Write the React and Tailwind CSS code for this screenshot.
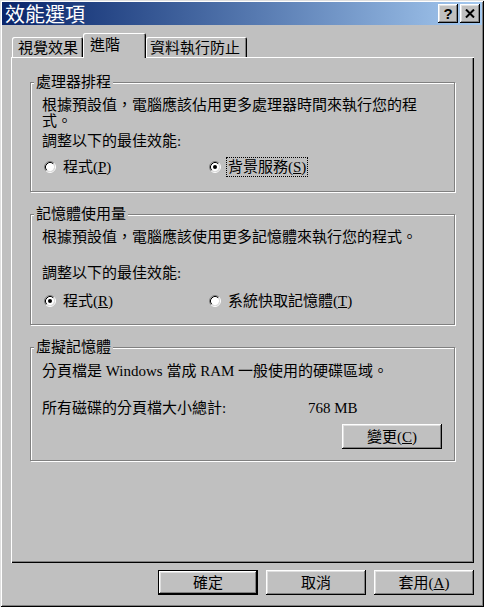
import React from 'react';

const raised = 'shadow-[inset_-1px_-1px_0_#000,inset_1px_1px_0_#fff,inset_-2px_-2px_0_#808080,inset_2px_2px_0_#dfdfdf]';

function Radio({ checked }) {
    return (
        <svg width="12" height="12" viewBox="0 0 12 12" className="shrink-0">
            <circle cx="6" cy="6" r="4.2" fill="#fff" />
            <path d="M2.11 9.89 A5.5 5.5 0 0 1 9.89 2.11" fill="none" stroke="#808080" />
            <path d="M9.89 2.11 A5.5 5.5 0 0 1 2.11 9.89" fill="none" stroke="#fff" />
            <path d="M2.82 9.18 A4.5 4.5 0 0 1 9.18 2.82" fill="none" stroke="#000" />
            <path d="M9.18 2.82 A4.5 4.5 0 0 1 2.82 9.18" fill="none" stroke="#dfdfdf" />
            {checked && <circle cx="6" cy="6" r="2" fill="#000" />}
        </svg>
    );
}

function Group({ label, className, children }) {
    return (
        <div className={`relative w-[425px] border border-[#808080] shadow-[inset_1px_1px_0_#fff,1px_1px_0_#fff] pl-[11px] ${className}`}>
            <span className="absolute -top-[9px] left-[3px] px-[2px] bg-[#c0c0c0]">{label}</span>
            {children}
        </div>
    );
}

function Button({ className = '', children }) {
    return (
        <button className={`h-[25px] w-[100px] flex items-center justify-center bg-[#c0c0c0] ${raised} ${className}`}>
            {children}
        </button>
    );
}

function Option({ checked, focused, children }) {
    return (
        <label className="w-[165px] flex items-center gap-[7px] pl-[2px]">
            <Radio checked={checked} />
            <span className={focused ? 'outline outline-1 outline-dotted outline-black outline-offset-[1px]' : ''}>
                {children}
            </span>
        </label>
    );
}

export default function App() {
    return (
        <div className="w-[484px] h-[607px] bg-[#c0c0c0] p-[2px] flex flex-col font-['Liberation_Serif','Noto_Sans_CJK_TC',serif] text-[15px] leading-[16px] text-black shadow-[inset_1px_1px_0_#dfdfdf,inset_-1px_-1px_0_#000,inset_2px_2px_0_#fff,inset_-2px_-2px_0_#808080]">
            {/* title bar */}
            <div className="h-[23px] flex items-center justify-between bg-linear-to-r from-[#0a246a] to-[#a6caf0] pl-[3px] pr-[2px]">
                <span className="text-white text-[20px] leading-[22px] font-['Noto_Sans_CJK_TC',sans-serif]">效能選項</span>
                <div className="flex gap-[2px]">
                    <div className={`w-[20px] h-[19px] flex items-center justify-center bg-[#c0c0c0] ${raised} font-['Liberation_Sans',sans-serif] font-bold text-[15px] leading-none pb-[1px]`}>?</div>
                    <div className={`w-[20px] h-[19px] flex items-center justify-center bg-[#c0c0c0] ${raised}`}>
                        <svg width="10" height="9" viewBox="0 0 10 9">
                            <path d="M1 0.5 L9 8.5 M9 0.5 L1 8.5" stroke="#000" strokeWidth="2" />
                        </svg>
                    </div>
                </div>
            </div>

            <div className="pt-[8px] pl-[9px] pr-[8px] flex flex-col">
                {/* tabs */}
                <div className="flex items-end h-[24px] pl-[1px]">
                    <div className="w-[71px] h-[20px] pl-[6px] pt-[3px] rounded-t-[2px] shadow-[inset_1px_1px_0_#fff,inset_-1px_0_0_#000,inset_-2px_0_0_#808080]">視覺效果</div>
                    <div className="relative z-10 w-[63px] h-[25px] -mb-[1px] pl-[7px] pt-[4px] bg-[#c0c0c0] rounded-t-[2px] shadow-[inset_1px_1px_0_#fff,inset_-1px_0_0_#000,inset_-2px_0_0_#808080]">進階</div>
                    <div className="w-[101px] h-[20px] pl-[4px] pt-[3px] rounded-t-[2px] shadow-[inset_1px_1px_0_#fff,inset_-1px_0_0_#000,inset_-2px_0_0_#808080]">資料執行防止</div>
                </div>

                {/* panel */}
                <div className="w-[463px] h-[506px] pt-[25px] pl-[19px] flex flex-col shadow-[inset_1px_1px_0_#fff,inset_-1px_-1px_0_#000,inset_-2px_-2px_0_#808080]">
                    <Group label="處理器排程" className="h-[110px] pt-[14px]">
                        <p className="w-[380px]">根據預設值，電腦應該佔用更多處理器時間來執行您的程式。</p>
                        <p className="mt-[4px]">調整以下的最佳效能:</p>
                        <div className="flex mt-[10px]">
                            <Option>程式(<u>P</u>)</Option>
                            <Option checked focused>背景服務(<u>S</u>)</Option>
                        </div>
                    </Group>

                    <Group label="記憶體使用量" className="mt-[22px] h-[111px] pt-[14px]">
                        <p className="w-[380px]">根據預設值，電腦應該使用更多記憶體來執行您的程式。</p>
                        <p className="mt-[20px]">調整以下的最佳效能:</p>
                        <div className="flex mt-[12px]">
                            <Option checked>程式(<u>R</u>)</Option>
                            <Option>系統快取記憶體(<u>T</u>)</Option>
                        </div>
                    </Group>

                    <Group label="虛擬記憶體" className="mt-[22px] h-[114px] pt-[15px]">
                        <p>分頁檔是 Windows 當成 RAM 一般使用的硬碟區域。</p>
                        <div className="flex mt-[21px]">
                            <span className="w-[266px]">所有磁碟的分頁檔大小總計:</span>
                            <span>768 MB</span>
                        </div>
                        <div className="flex justify-end mr-[12px] mt-[8px]">
                            <Button>變更(<u>C</u>)</Button>
                        </div>
                    </Group>
                </div>

                {/* dialog buttons */}
                <div className="mt-[7px] flex justify-end gap-[8px]">
                    <Button className="border border-black">確定</Button>
                    <Button>取消</Button>
                    <Button>套用(<u>A</u>)</Button>
                </div>
            </div>
        </div>
    );
}
